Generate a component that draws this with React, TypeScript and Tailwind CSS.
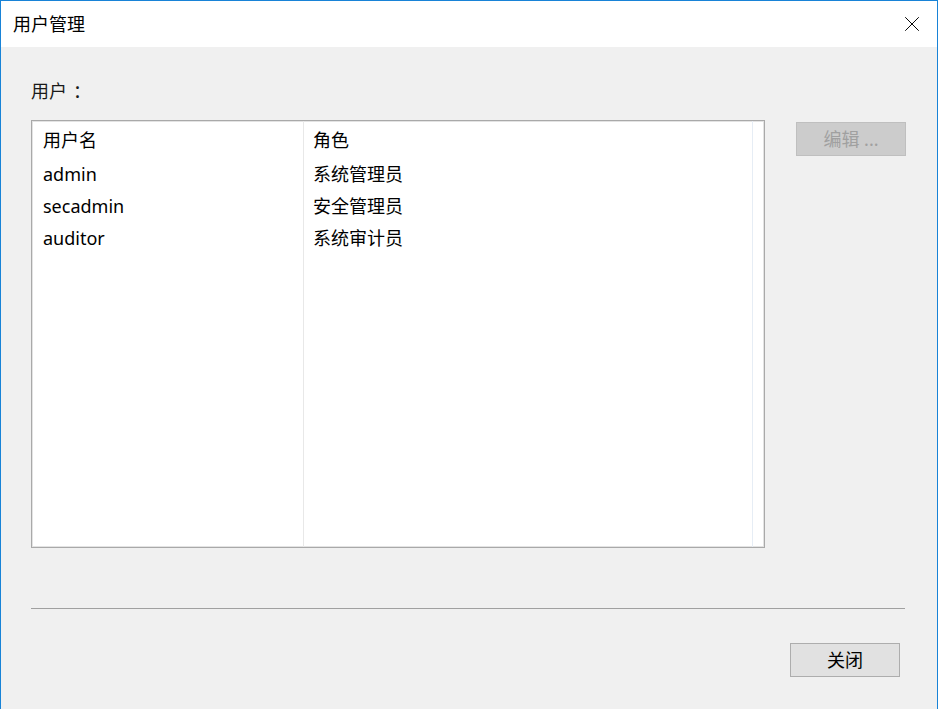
import { X } from 'lucide-react';

const users = [
  { name: 'admin', role: '系统管理员' },
  { name: 'secadmin', role: '安全管理员' },
  { name: 'auditor', role: '系统审计员' },
];

const font = "font-['Noto_Sans','Noto_Sans_CJK_SC',sans-serif]";

export default function App() {
  return (
    <div
      className={`${font} flex h-[709px] w-[938px] flex-col border-x border-t border-[#1883d7] bg-[#f0f0f0] text-[18px] text-black`}
    >
      {/* Title bar */}
      <div className="flex h-[46px] items-center justify-between bg-white pl-[12px] pr-[12px]">
        <span className="text-[18px] leading-none">用户管理</span>
        <X className="h-[26px] w-[26px] text-black" strokeWidth={0.9} />
      </div>

      <div className="flex flex-1 flex-col pl-[30px] pr-[31px]">
        <div className="mt-[32px] h-[24px] leading-[24px] text-[#1a1a1a]">
          用户<span className="ml-[6px]">：</span>
        </div>

        <div className="mt-[17px] flex items-start gap-[31px]">
          {/* List view */}
          <div className="flex h-[428px] w-[734px] shrink-0 border border-[#a9a9a9] bg-white shadow-[inset_0_0_0_1px_#e3e3e3]">
            <div className="flex w-[272px] flex-col border-r border-[#e8e8e8] pl-[11px]">
              <div className="flex h-[37px] items-center pt-[1px]">用户名</div>
              {users.map((u) => (
                <div key={u.name} className="flex h-[32px] items-center">
                  {u.name}
                </div>
              ))}
            </div>
            <div className="flex w-[449px] flex-col border-r border-[#e6edf5] pl-[9px]">
              <div className="flex h-[37px] items-center pt-[1px]">角色</div>
              {users.map((u) => (
                <div key={u.name} className="flex h-[32px] items-center">
                  {u.role}
                </div>
              ))}
            </div>
          </div>

          <button className="mt-[2px] flex h-[34px] w-[110px] shrink-0 items-center justify-center border border-[#bfbfbf] bg-[#cccccc] text-[18px] text-[#a0a0a0]">
            编辑 ...
          </button>
        </div>

        <div className="mt-[60px] h-[2px] w-[874px] border-t border-[#a0a0a0] border-b-[#ffffff]" />

        <div className="mt-[33px] flex w-[874px] justify-end pr-[5px]">
          <button className="flex h-[34px] w-[110px] items-center justify-center border border-[#adadad] bg-[#e1e1e1] text-[18px]">
            关闭
          </button>
        </div>
      </div>
    </div>
  );
}
